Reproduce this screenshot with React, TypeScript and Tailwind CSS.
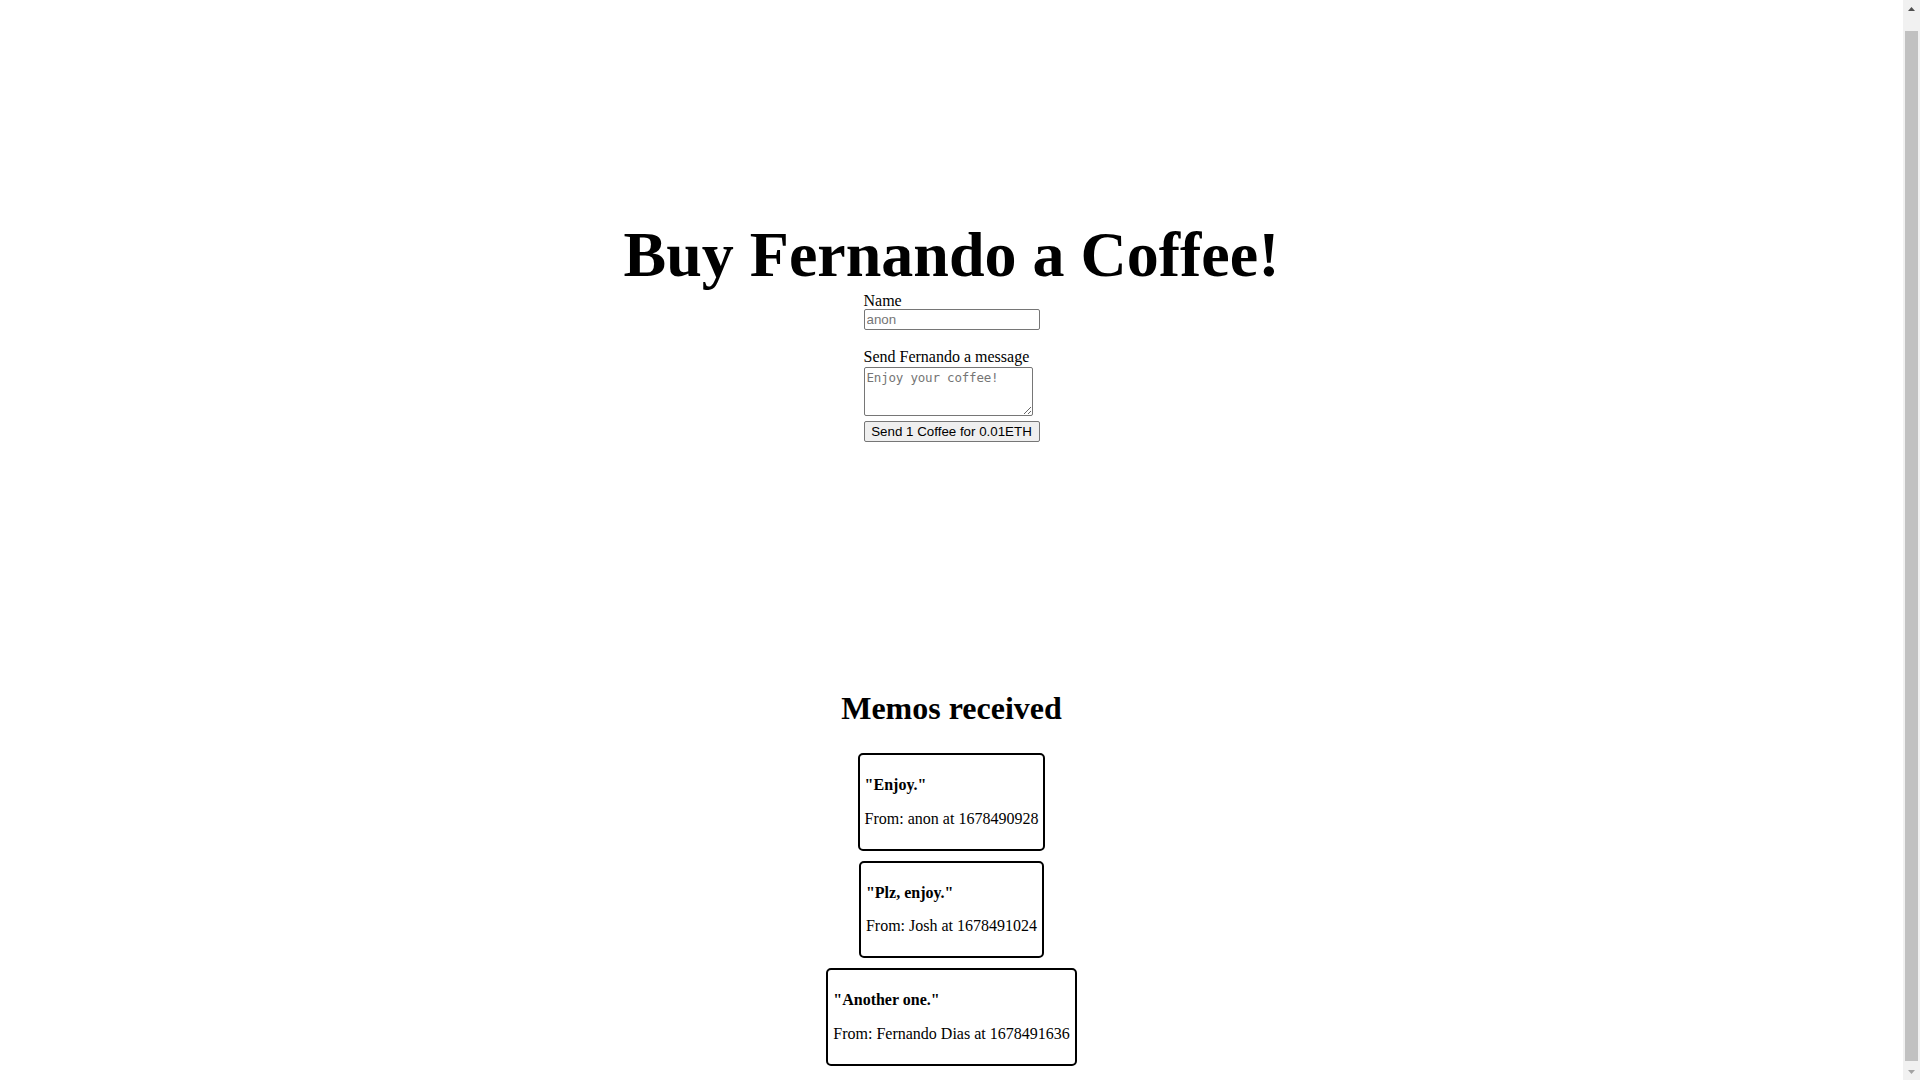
const memos = [
  { message: 'Enjoy.', name: 'anon', timestamp: 1678490928 },
  { message: 'Plz, enjoy.', name: 'Josh', timestamp: 1678491024 },
  { message: 'Another one.', name: 'Fernando Dias', timestamp: 1678491636 },
]

function Scrollbar() {
  return (
    <div className="fixed top-0 right-0 w-[17px] h-screen bg-[#f1f1f1] flex flex-col">
      <div className="h-[17px] flex items-center justify-center">
        <svg width="7" height="4" viewBox="0 0 7 4">
          <path d="M0 4 L3.5 0 L7 4 Z" fill="#505050" />
        </svg>
      </div>
      <div className="flex-1 flex flex-col px-[2px] pt-[14px] pb-[2px]">
        <div className="flex-1 bg-[#c1c1c1]" />
      </div>
      <div className="h-[17px] flex items-center justify-center">
        <svg width="7" height="4" viewBox="0 0 7 4">
          <path d="M0 0 L3.5 4 L7 0 Z" fill="#a3a3a3" />
        </svg>
      </div>
    </div>
  )
}

export default function App() {
  return (
    <div className="flex flex-col items-center min-h-[1097px] pr-[17px] bg-white text-black font-['Liberation_Serif','Times_New_Roman',serif] text-[16px] leading-[1.107]">
      <main className="flex flex-col items-center h-[670px] pt-[218px]">
        <h1 className="m-0 text-[64px] font-bold leading-[1.15]">Buy Fernando a Coffee!</h1>
        <form className="flex flex-col items-start" onSubmit={e => e.preventDefault()}>
          <label htmlFor="name" className="block">Name</label>
          <input
            id="name"
            type="text"
            placeholder="anon"
            className="w-[176px] h-[21px] px-[2px] py-[1px] border border-[#767676] rounded-[2px] bg-white font-['Liberation_Sans',Arial,sans-serif] text-[13.333px] leading-normal placeholder:text-[#757575] outline-none"
          />
          <label htmlFor="message" className="block mt-[18px]">Send Fernando a message</label>
          <textarea
            id="message"
            placeholder="Enjoy your coffee!"
            className="mt-[1px] w-[169px] h-[49px] p-[2px] border border-[#767676] rounded-[2px] bg-white font-['DejaVu_Sans_Mono','Liberation_Mono',monospace] text-[12.5px] tracking-[-0.2px] leading-[1.2] placeholder:text-[#757575] resize outline-none"
          />
          <button
            type="button"
            className="mt-[5px] w-[176px] h-[21px] px-[6px] border border-[#767676] rounded-[2px] bg-[#efefef] font-['Liberation_Sans',Arial,sans-serif] text-[13.333px] leading-normal text-black"
          >
            Send 1 Coffee for 0.01ETH
          </button>
        </form>
      </main>
      <h1 className="my-[21.44px] text-[32px] font-bold">Memos received</h1>
      {memos.map((memo, idx) => (
        <div key={idx} className="m-[5px] p-[5px] border-2 border-black rounded-[5px]">
          <p className="my-4 font-bold">"{memo.message}"</p>
          <p className="my-4">From: {memo.name} at {memo.timestamp}</p>
        </div>
      ))}
      <Scrollbar />
    </div>
  )
}
